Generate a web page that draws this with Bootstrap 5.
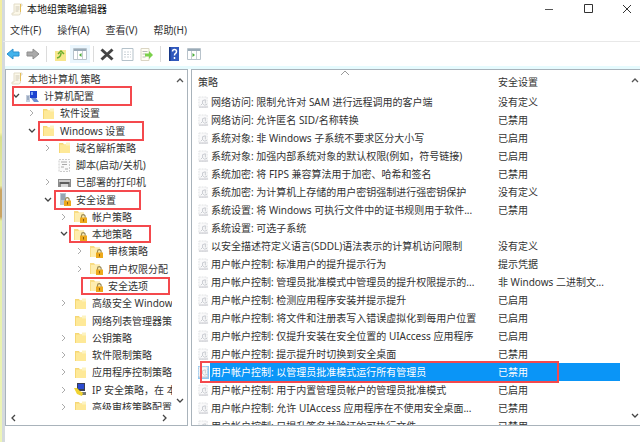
<!DOCTYPE html>
<html lang="zh-CN">
<head>
<meta charset="utf-8">
<meta name="viewport" content="width=device-width, initial-scale=1">
<title>本地组策略编辑器</title>
<link href="https://cdn.jsdelivr.net/npm/bootstrap@5.3.0/dist/css/bootstrap.min.css" rel="stylesheet">
<style>
  body { font: 10px/16px "Noto Sans", "Noto Sans CJK SC", sans-serif; color: #333; background: #fff; }
  svg { display: block; flex: none; }
  .desk-edge { flex: none; width: 2px; background: linear-gradient(#f2eda0, #f6f2a8 30%, #d9e08c 31%, #e6eba6 42%, #c9a463 43%, #c9a463 49%, #e4efa4 50%, #eef5b8); }
  .win-edge { flex: none; width: 3px; background: #d5dadd; }
  .app { flex: 1 1 0; min-width: 0; min-height: 0; }
  .titlebar { height: 19px; padding-left: 5px; }
  .titlebar h1 { font-size: 10px; line-height: 16px; color: #111; }
  .win-btn { width: 39px; height: 18px; }
  .win-btns { margin-right: -6px; }
  .plain { border: 0; background: none; padding: 0; color: inherit; line-height: 16px; }
  .menus { height: 23px; padding-left: 5px; gap: 16px; }
  .tools { height: 26px; border-top: 1px solid #e8e8e8; margin-left: -2px; }
  .strip { height: 3px; background: #e6fbfe; }
  .tool { height: 18px; width: 20px; display: flex; align-items: center; justify-content: center; }
  .tool.on { background: #eaf6fd; }
  .sep { width: 1px; height: 16px; background: #dcdcdc; margin: 0 3px; }
  .panes { gap: 3px; min-height: 0; }
  .pane { border: 1px solid #a9b3bb; min-height: 0; overflow: hidden; }
  .tree-pane { flex: 0 0 183px; }
  .list-pane { flex: 1 1 0; min-width: 0; border-right: 0; }
  .tree { flex: 1 1 0; min-width: 0; margin: 0 0 -5px; padding: 0; list-style: none; overflow: hidden; }
  .tree li { flex: 1 1 0; min-height: 0; display: flex; align-items: center; white-space: nowrap; padding-left: calc(5px + 16px * (var(--lv) - 1)); }
  .tree li.root { padding-left: 4px; }
  .tw { flex: none; width: 10px; margin-right: 5px; }
  .node { display: flex; align-items: center; gap: 5px; height: 16px; }
  .lv1 { --lv: 1; } .lv2 { --lv: 2; } .lv3 { --lv: 3; } .lv4 { --lv: 4; } .lv5 { --lv: 5; }
  .vbar { width: 15px; padding: 5px 0 4px; }
  .hbar { height: 15px; padding: 0 18px 0 3px; }
  .ringed { position: relative; }
  .ringed::after { content: ""; position: absolute; border: 2px solid #f4494d; inset: -2px 0; }
  .ring-wide::after { left: -14px; right: -38px; }
  .ring-long::after { left: -4px; right: -19px; }
  .ring-sec::after { left: -4px; right: -25px; }
  .ring-loc::after { left: -5px; right: -19px; inset-block: -1px; }
  .ring-opt::after { left: -9px; right: -22px; inset-block: -1px; }
  .rows { flex: 1 1 0; min-width: 0; overflow: hidden; }
  .policies { width: calc(100% - 10px); table-layout: fixed; border-collapse: collapse; }
  .policies th { height: 23px; font-weight: 400; padding: 0 0 0 6px; position: relative; }
  .policies td { height: 18px; padding: 0 0 0 6px; white-space: nowrap; }
  .policies th + th, .policies td + td { padding-left: 0; }
  .c-set { width: 122px; }
  .pol { display: flex; align-items: center; gap: 2px; }
  .sorted { position: absolute; left: 50%; margin-left: -5px; top: 0; }
  .policies tr.picked { position: relative; color: #fff; }
  .picked td { background: #0a95f7; }
  .picked td:first-child { background: linear-gradient(90deg, #fff 18px, #0a95f7 18px); }
  .picked .pol svg { background: #8fc8f3; }
  .picked td:last-child::after { content: ""; position: absolute; left: 8px; top: -2px; bottom: -2px; right: 61px; border: 2px solid #f4494d; }
  .list-pane .vbar { width: 10px; }
  .foot { height: 16px; }
</style>
</head>
<body>
<svg width="0" height="0" class="position-absolute" aria-hidden="true">
  <defs>
    <symbol id="i-folder" viewBox="0 0 13 13"><path d="M1 2h4l1 1.500h6V12H1z" fill="#f6d774"/><path d="M2 3.500h10V12H2z" fill="#fee998"/><path d="M8 1.500h4v3H8z" fill="#fdf3c0"/></symbol>
    <symbol id="i-lock" viewBox="0 0 13 13"><path d="M0 1h4l1 1.500h5V12H0z" fill="#f8dc83"/><path d="M1 3h9v9H1z" fill="#feedae"/><path d="M7.500 8V6.500a1.800 1.800 0 0 1 3.600 0V8" fill="none" stroke="#9a8a56" stroke-width="1.200"/><path d="M6 7.500h7V13H6z" fill="#eda91c"/><path d="M9 9h1v2.500H9z" fill="#865d12"/></symbol>
    <symbol id="i-server" viewBox="0 0 13 13"><path d="M2 0h6v12H2z" fill="#bcc8d2"/><path d="M3 2h4M3 4h4M3 6h4" stroke="#708391"/><path d="M7.500 8V6.500a1.800 1.800 0 0 1 3.600 0V8" fill="none" stroke="#9a8a56" stroke-width="1.200"/><path d="M6 7.500h7V13H6z" fill="#eda91c"/><path d="M9 9h1v2.500H9z" fill="#865d12"/></symbol>
    <symbol id="i-scroll" viewBox="0 0 13 13"><path d="M4 1h8v2h-1.500v7q0 2-2 2H2v-2h2z" fill="#fcf8e9" stroke="#e2dcc8"/><path d="M5.500 4h4M5.500 6h4M5.500 8h3" stroke="#cdc8b8"/><path d="M10.500 1v8" stroke="#e5bd5a"/></symbol>
    <symbol id="i-script" viewBox="0 0 13 13"><path d="M1 .5h10.500v12H1z" fill="#fafafa" stroke="#ccc" stroke-dasharray="2 1"/><path d="M3 3h6M4 5.500h5M3 8h3M7 10h3" stroke="#aaa"/></symbol>
    <symbol id="i-pc" viewBox="0 0 13 13"><path d="M4 1h7v7H4z" fill="#1c43cf"/><path d="M5 2h2v3H5z" fill="#7ba5f4"/><path d="M0 5h4v7H0z" fill="#c4cedd"/><path d="M5 8h5l3 4H8z" fill="#6d8fd0"/><path d="M1 7h2M1 9h2" stroke="#7488a5"/></symbol>
    <symbol id="i-print" viewBox="0 0 13 13"><path d="M0 3h13v8H0z" fill="#8b8b8b"/><path d="M1 4h11v2H1z" fill="#ccc"/><path d="M3 8h7v3H3z" fill="#dadada"/><path d="M2 7h9" stroke="#333"/></symbol>
    <symbol id="i-ip" viewBox="0 0 13 13"><path d="M3 0h8v8H3z" fill="#3a3f53"/><path d="M4 1h6v5H4z" fill="#2c4bd0"/><path d="M5 9h7v3H5z" fill="#777a76"/><path d="M0 5l3 0 3 3 3 2-1 3-5-2z" fill="#f0d331"/></symbol>
    <symbol id="i-pol" viewBox="0 0 12 14"><path d="M1 1h9v11H1z" fill="#f9f9fa" stroke="#dfe1e4" stroke-dasharray="2 1"/><path d="M5 8V5l3-1v4M3 10l2-2 2 2 3-1" fill="none" stroke="#c4c7cd"/><path d="M1 12h10" stroke="#c3c5ca"/></symbol>
    <symbol id="i-right" viewBox="0 0 10 10"><path d="M3 2l3 3-3 3" fill="none" stroke="#ababab"/></symbol>
    <symbol id="i-down" viewBox="0 0 10 10"><path d="M2 3l3 3 3-3" fill="none" stroke="#444" stroke-width="1.300"/></symbol>
    <symbol id="i-up" viewBox="0 0 10 10"><path d="M2 7l3-3 3 3" fill="none" stroke="#555" stroke-width="1.300"/></symbol>
  </defs>
</svg>
<div class="vh-100 d-flex">
  <div class="desk-edge"></div>
  <div class="win-edge"></div>
  <main class="app d-flex flex-column">
    <header class="titlebar d-flex align-items-center">
      <svg width="13" height="13"><use href="#i-scroll"/></svg>
      <h1 class="m-0 ms-1 fw-normal flex-grow-1">本地组策略编辑器</h1>
      <div class="win-btns d-flex">
        <button class="plain win-btn" aria-label="最小化"><svg class="mx-auto" width="10" height="10"><path d="M1 5.500h8" stroke="#555"/></svg></button>
        <button class="plain win-btn" aria-label="最大化"><svg class="mx-auto" width="10" height="10"><path d="M1.500.5h8v8h-8z" fill="none" stroke="#333"/></svg></button>
        <button class="plain win-btn" aria-label="关闭"><svg class="mx-auto" width="10" height="10"><path d="M1 1l8 8M9 1l-8 8" stroke="#333"/></svg></button>
      </div>
    </header>
    <nav class="menus d-flex align-items-center">
      <button class="plain">文件(F)</button><button class="plain">操作(A)</button><button class="plain">查看(V)</button><button class="plain">帮助(H)</button>
    </nav>
    <div class="tools d-flex align-items-center">
      <button class="plain tool" aria-label="后退"><svg width="14" height="12"><path d="M1 6l6-5v3h6v4H7v3z" fill="#42b3ec" stroke="#2b91cf"/></svg></button>
      <button class="plain tool" aria-label="前进"><svg width="14" height="12"><path d="M13 6L7 1v3H1v4h6v3z" fill="#aaa" stroke="#8d8d8d"/></svg></button>
      <span class="sep"></span>
      <button class="plain tool" aria-label="向上"><svg width="13" height="13"><path d="M1 3h4l1-1h6v11H1z" fill="#f7e68c"/><path d="M3 10q4-1 4-5M4 6l3-3 3 3" fill="none" stroke="#6aae2d" stroke-width="1.500"/></svg></button>
      <button class="plain tool on" aria-label="显示树"><svg width="14" height="12"><path d="M.5.5h13v11H.5z" fill="#fff" stroke="#b8c3cb"/><path d="M1 2h12" stroke="#9aabb8" stroke-width="2"/><path d="M4.500 3v8M9.500 3v8" stroke="#c6ced4"/><path d="M8.500 5v4L6 7z" fill="#48ac38"/></svg></button>
      <span class="sep"></span>
      <button class="plain tool" aria-label="删除"><svg width="14" height="13"><path d="M1.500 1.500l11 10M12.500 1.500l-11 10" stroke="#444" stroke-width="3"/></svg></button>
      <button class="plain tool" aria-label="属性"><svg width="13" height="13"><path d="M1 .5h11v12H1z" fill="#fff" stroke="#b5c2ca"/><path d="M3 4h7M3 6.500h7M3 9h7" stroke="#ccd3d8" stroke-dasharray="2 1"/></svg></button>
      <button class="plain tool" aria-label="导出列表"><svg width="14" height="13"><path d="M1 .5h8v12H1z" fill="#fffef2" stroke="#dad5c4"/><path d="M2.500 3.500h5M2.500 6h3M2.500 9h3" stroke="#bbb"/><path d="M5 5.500h4V3l4 4-4 4V8.500H5z" fill="#7ad04a"/></svg></button>
      <span class="sep"></span>
      <button class="plain tool" aria-label="帮助"><svg width="12" height="14"><path d="M1 0h10v14H1z" fill="#3159bd"/><path d="M1 0h1.500v14H1z" fill="#173887"/><path d="M4.500 4.500q0-2 2-2t2 2q0 1.200-1 1.800t-1 2.200M6.500 10v2" fill="none" stroke="#fff" stroke-width="1.500"/></svg></button>
      <button class="plain tool" aria-label="操作窗格"><svg width="14" height="12"><path d="M.5.5h13v11H.5z" fill="#fff" stroke="#b8c3cb"/><path d="M1 2h12" stroke="#9aabb8" stroke-width="2"/><path d="M4.500 3v8M9.500 3v8" stroke="#c6ced4"/><path d="M5.500 5v4L8 7z" fill="#48ac38"/></svg></button>
    </div>
    <div class="strip"></div>
    <div class="panes d-flex flex-grow-1">
      <section class="pane tree-pane d-flex flex-column">
        <div class="d-flex flex-grow-1 overflow-hidden">
          <ul class="tree d-flex flex-column">
            <li class="root"><span class="node"><svg width="13" height="13"><use href="#i-scroll"/></svg>本地计算机 策略</span></li>
            <li class="lv1"><svg class="tw" height="10"><use href="#i-down"/></svg><span class="node ringed ring-wide"><svg width="13" height="13"><use href="#i-pc"/></svg>计算机配置</span></li>
            <li class="lv2"><svg class="tw" height="10"><use href="#i-right"/></svg><span class="node"><svg width="13" height="13"><use href="#i-folder"/></svg>软件设置</span></li>
            <li class="lv2"><svg class="tw" height="10"><use href="#i-down"/></svg><span class="node ringed ring-long"><svg width="13" height="13"><use href="#i-folder"/></svg>Windows 设置</span></li>
            <li class="lv3"><svg class="tw" height="10"><use href="#i-right"/></svg><span class="node"><svg width="13" height="13"><use href="#i-folder"/></svg>域名解析策略</span></li>
            <li class="lv3"><span class="tw"></span><span class="node"><svg width="13" height="13"><use href="#i-script"/></svg>脚本(启动/关机)</span></li>
            <li class="lv3"><svg class="tw" height="10"><use href="#i-right"/></svg><span class="node"><svg width="13" height="13"><use href="#i-print"/></svg>已部署的打印机</span></li>
            <li class="lv3"><svg class="tw" height="10"><use href="#i-down"/></svg><span class="node ringed ring-sec"><svg width="13" height="13"><use href="#i-server"/></svg>安全设置</span></li>
            <li class="lv4"><svg class="tw" height="10"><use href="#i-right"/></svg><span class="node"><svg width="13" height="13"><use href="#i-lock"/></svg>帐户策略</span></li>
            <li class="lv4"><svg class="tw" height="10"><use href="#i-down"/></svg><span class="node ringed ring-loc"><svg width="13" height="13"><use href="#i-lock"/></svg>本地策略</span></li>
            <li class="lv5"><svg class="tw" height="10"><use href="#i-right"/></svg><span class="node"><svg width="13" height="13"><use href="#i-lock"/></svg>审核策略</span></li>
            <li class="lv5"><svg class="tw" height="10"><use href="#i-right"/></svg><span class="node"><svg width="13" height="13"><use href="#i-lock"/></svg>用户权限分配</span></li>
            <li class="lv5"><span class="tw"></span><span class="node ringed ring-opt"><svg width="13" height="13"><use href="#i-lock"/></svg>安全选项</span></li>
            <li class="lv4"><svg class="tw" height="10"><use href="#i-right"/></svg><span class="node"><svg width="13" height="13"><use href="#i-folder"/></svg>高级安全 Windows</span></li>
            <li class="lv4"><span class="tw"></span><span class="node"><svg width="13" height="13"><use href="#i-folder"/></svg>网络列表管理器策</span></li>
            <li class="lv4"><svg class="tw" height="10"><use href="#i-right"/></svg><span class="node"><svg width="13" height="13"><use href="#i-folder"/></svg>公钥策略</span></li>
            <li class="lv4"><svg class="tw" height="10"><use href="#i-right"/></svg><span class="node"><svg width="13" height="13"><use href="#i-folder"/></svg>软件限制策略</span></li>
            <li class="lv4"><svg class="tw" height="10"><use href="#i-right"/></svg><span class="node"><svg width="13" height="13"><use href="#i-folder"/></svg>应用程序控制策略</span></li>
            <li class="lv4"><svg class="tw" height="10"><use href="#i-right"/></svg><span class="node"><svg width="13" height="13"><use href="#i-ip"/></svg>IP 安全策略，在 本</span></li>
            <li class="lv4"><svg class="tw" height="10"><use href="#i-right"/></svg><span class="node"><svg width="13" height="13"><use href="#i-folder"/></svg>高级审核策略配置</span></li>
          </ul>
          <div class="vbar d-flex flex-column justify-content-between align-items-center"><svg width="10" height="10"><use href="#i-up"/></svg><svg width="10" height="10"><use href="#i-down"/></svg></div>
        </div>
        <div class="hbar d-flex justify-content-between align-items-center"><svg width="10" height="10"><path d="M6 2L3 5l3 3" fill="none" stroke="#444" stroke-width="1.300"/></svg><svg width="10" height="10"><path d="M4 2l3 3-3 3" fill="none" stroke="#444" stroke-width="1.300"/></svg></div>
      </section>
      <section class="pane list-pane d-flex">
        <div class="rows">
          <table class="policies">
            <colgroup><col><col class="c-set"></colgroup>
            <thead><tr><th scope="col">策略<svg class="sorted" width="10" height="6"><path d="M1 5l4-4 4 4" fill="none" stroke="#999"/></svg></th><th scope="col">安全设置</th></tr></thead>
            <tbody>
              <tr><td><span class="pol"><svg width="11" height="13"><use href="#i-pol"/></svg>网络访问: 限制允许对 SAM 进行远程调用的客户端</span></td><td>没有定义</td></tr>
              <tr><td><span class="pol"><svg width="11" height="13"><use href="#i-pol"/></svg>网络访问: 允许匿名 SID/名称转换</span></td><td>已禁用</td></tr>
              <tr><td><span class="pol"><svg width="11" height="13"><use href="#i-pol"/></svg>系统对象: 非 Windows 子系统不要求区分大小写</span></td><td>已启用</td></tr>
              <tr><td><span class="pol"><svg width="11" height="13"><use href="#i-pol"/></svg>系统对象: 加强内部系统对象的默认权限(例如，符号链接)</span></td><td>已启用</td></tr>
              <tr><td><span class="pol"><svg width="11" height="13"><use href="#i-pol"/></svg>系统加密: 将 FIPS 兼容算法用于加密、哈希和签名</span></td><td>已禁用</td></tr>
              <tr><td><span class="pol"><svg width="11" height="13"><use href="#i-pol"/></svg>系统加密: 为计算机上存储的用户密钥强制进行强密钥保护</span></td><td>没有定义</td></tr>
              <tr><td><span class="pol"><svg width="11" height="13"><use href="#i-pol"/></svg>系统设置: 将 Windows 可执行文件中的证书规则用于软件...</span></td><td>已禁用</td></tr>
              <tr><td><span class="pol"><svg width="11" height="13"><use href="#i-pol"/></svg>系统设置: 可选子系统</span></td><td></td></tr>
              <tr><td><span class="pol"><svg width="11" height="13"><use href="#i-pol"/></svg>以安全描述符定义语言(SDDL)语法表示的计算机访问限制</span></td><td>没有定义</td></tr>
              <tr><td><span class="pol"><svg width="11" height="13"><use href="#i-pol"/></svg>用户帐户控制: 标准用户的提升提示行为</span></td><td>提示凭据</td></tr>
              <tr><td><span class="pol"><svg width="11" height="13"><use href="#i-pol"/></svg>用户帐户控制: 管理员批准模式中管理员的提升权限提示的...</span></td><td>非 Windows 二进制文...</td></tr>
              <tr><td><span class="pol"><svg width="11" height="13"><use href="#i-pol"/></svg>用户帐户控制: 检测应用程序安装并提示提升</span></td><td>已启用</td></tr>
              <tr><td><span class="pol"><svg width="11" height="13"><use href="#i-pol"/></svg>用户帐户控制: 将文件和注册表写入错误虚拟化到每用户位置</span></td><td>已启用</td></tr>
              <tr><td><span class="pol"><svg width="11" height="13"><use href="#i-pol"/></svg>用户帐户控制: 仅提升安装在安全位置的 UIAccess 应用程序</span></td><td>已启用</td></tr>
              <tr><td><span class="pol"><svg width="11" height="13"><use href="#i-pol"/></svg>用户帐户控制: 提示提升时切换到安全桌面</span></td><td>已禁用</td></tr>
              <tr class="picked"><td><span class="pol"><svg width="11" height="13"><use href="#i-pol"/></svg>用户帐户控制: 以管理员批准模式运行所有管理员</span></td><td>已禁用</td></tr>
              <tr><td><span class="pol"><svg width="11" height="13"><use href="#i-pol"/></svg>用户帐户控制: 用于内置管理员帐户的管理员批准模式</span></td><td>已启用</td></tr>
              <tr><td><span class="pol"><svg width="11" height="13"><use href="#i-pol"/></svg>用户帐户控制: 允许 UIAccess 应用程序在不使用安全桌面...</span></td><td>已禁用</td></tr>
              <tr><td><span class="pol"><svg width="11" height="13"><use href="#i-pol"/></svg>用户帐户控制: 只提升签名并验证的可执行文件</span></td><td>已禁用</td></tr>
            </tbody>
          </table>
        </div>
        <div class="vbar d-flex flex-column justify-content-between"><svg width="10" height="10"><use href="#i-up"/></svg><svg width="10" height="10"><use href="#i-down"/></svg></div>
      </section>
    </div>
    <div class="foot"></div>
  </main>
</div>
<script src="https://cdn.jsdelivr.net/npm/bootstrap@5.3.0/dist/js/bootstrap.bundle.min.js"></script>
</body>
</html>
